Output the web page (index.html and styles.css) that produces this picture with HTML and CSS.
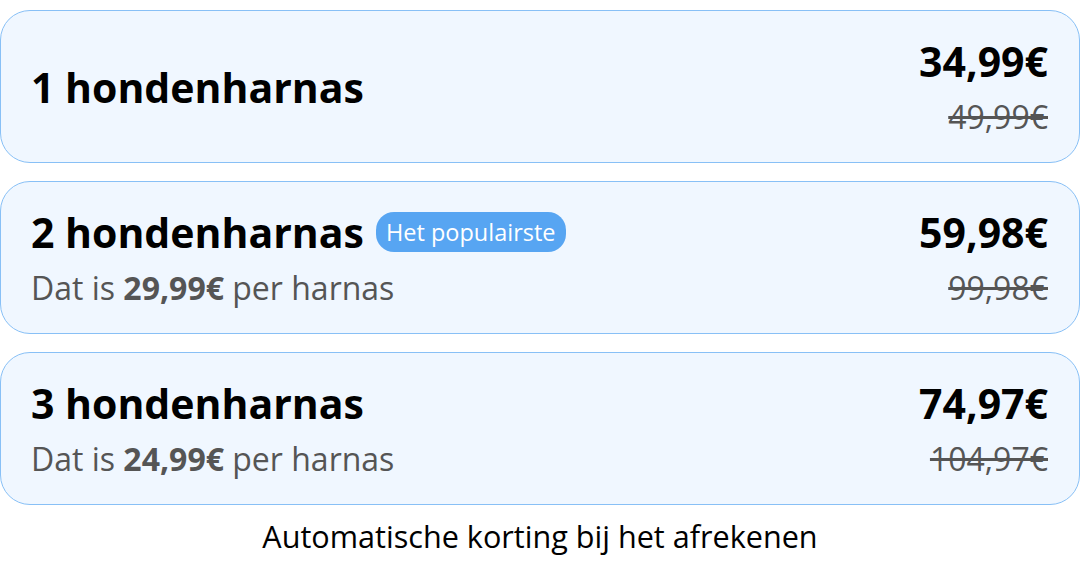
FILE: index.html
```html
<!DOCTYPE html>
<html lang="nl">
<head>
<meta charset="utf-8">
<link rel="stylesheet" href="styles.css">
</head>
<body>
<div class="offers">
  <div class="card">
    <div class="info">
      <div class="title">1 hondenharnas</div>
    </div>
    <div class="prices">
      <div class="price">34,99€</div>
      <div class="old">49,99€</div>
    </div>
  </div>
  <div class="card">
    <div class="info">
      <div class="title">2 hondenharnas <span class="badge">Het populairste</span></div>
      <div class="sub">Dat is <b>29,99€</b> per harnas</div>
    </div>
    <div class="prices">
      <div class="price">59,98€</div>
      <div class="old">99,98€</div>
    </div>
  </div>
  <div class="card">
    <div class="info">
      <div class="title">3 hondenharnas</div>
      <div class="sub">Dat is <b>24,99€</b> per harnas</div>
    </div>
    <div class="prices">
      <div class="price">74,97€</div>
      <div class="old">104,97€</div>
    </div>
  </div>
  <div class="note">Automatische korting bij het afrekenen</div>
</div>
</body>
</html>
```
FILE: styles.css
```css
* { box-sizing: border-box; }
html, body { margin: 0; padding: 0; background: #fff; }
body { font-family: "Open Sans", "Noto Sans", sans-serif; color: #000; }
.offers {
  width: 1080px;
  padding-top: 10px;
  display: flex;
  flex-direction: column;
  gap: 18px;
}
.card {
  height: 153px;
  border: 1px solid #88c0f6;
  border-radius: 30px;
  background: #f0f7ff;
  padding: 0 31px 0 30px;
  display: flex;
  justify-content: space-between;
  align-items: center;
}
.info, .prices {
  display: flex;
  flex-direction: column;
  gap: 12px;
}
.prices { align-items: flex-end; }
.title, .price {
  font-size: 41px;
  line-height: 48px;
  font-weight: 700;
  display: flex;
  align-items: center;
}
.badge {
  margin-left: 12px;
  font-size: 23.5px;
  line-height: 40px;
  font-weight: 400;
  color: #fff;
  background: #57a5f2;
  border-radius: 18px;
  padding: 0 10px;
}
.sub, .old {
  font-size: 32px;
  line-height: 40px;
  color: #555;
}
.sub b { font-weight: 700; }
.old { text-decoration: line-through; }
.note {
  margin-top: -7px;
  text-align: center;
  font-size: 30.6px;
  line-height: 40px;
  color: #000;
}
```
